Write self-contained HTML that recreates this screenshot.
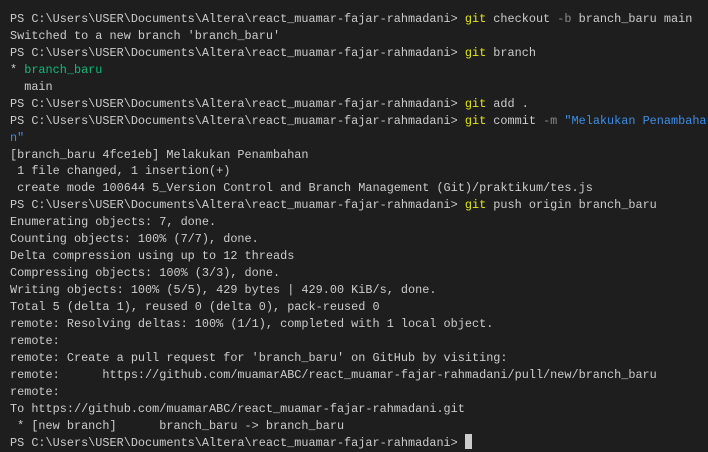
<!DOCTYPE html>
<html><head><meta charset="utf-8"><style>
html,body{margin:0;padding:0;background:#1e1e1e;width:708px;height:452px;overflow:hidden}
pre{margin:0;padding:11px 0 0 10px;font-family:"Liberation Mono",monospace;font-size:11.85px;line-height:16.93px;color:#cccccc;white-space:pre}
.y{color:#e5e510}.b{color:#3b8eea}.g{color:#0dbc79}.d{color:#8a8a8a}
.cur{display:inline-block;width:7px;height:15px;background:#cccccc;vertical-align:-3px}
</style></head><body><pre>PS C:\Users\USER\Documents\Altera\react_muamar-fajar-rahmadani&gt; <span class="y">git</span> checkout <span class="d">-b</span> branch_baru main
Switched to a new branch 'branch_baru'
PS C:\Users\USER\Documents\Altera\react_muamar-fajar-rahmadani&gt; <span class="y">git</span> branch
* <span class="g">branch_baru</span>
  main
PS C:\Users\USER\Documents\Altera\react_muamar-fajar-rahmadani&gt; <span class="y">git</span> add .
PS C:\Users\USER\Documents\Altera\react_muamar-fajar-rahmadani&gt; <span class="y">git</span> commit <span class="d">-m</span> <span class="b">"Melakukan Penambaha</span>
<span class="b">n"</span>
[branch_baru 4fce1eb] Melakukan Penambahan
 1 file changed, 1 insertion(+)
 create mode 100644 5_Version Control and Branch Management (Git)/praktikum/tes.js
PS C:\Users\USER\Documents\Altera\react_muamar-fajar-rahmadani&gt; <span class="y">git</span> push origin branch_baru
Enumerating objects: 7, done.
Counting objects: 100% (7/7), done.
Delta compression using up to 12 threads
Compressing objects: 100% (3/3), done.
Writing objects: 100% (5/5), 429 bytes | 429.00 KiB/s, done.
Total 5 (delta 1), reused 0 (delta 0), pack-reused 0
remote: Resolving deltas: 100% (1/1), completed with 1 local object.
remote:
remote: Create a pull request for 'branch_baru' on GitHub by visiting:
remote:      https://github.com/muamarABC/react_muamar-fajar-rahmadani/pull/new/branch_baru
remote:
To https://github.com/muamarABC/react_muamar-fajar-rahmadani.git
 * [new branch]      branch_baru -&gt; branch_baru
PS C:\Users\USER\Documents\Altera\react_muamar-fajar-rahmadani&gt; <span class="cur"></span></pre></body></html>
